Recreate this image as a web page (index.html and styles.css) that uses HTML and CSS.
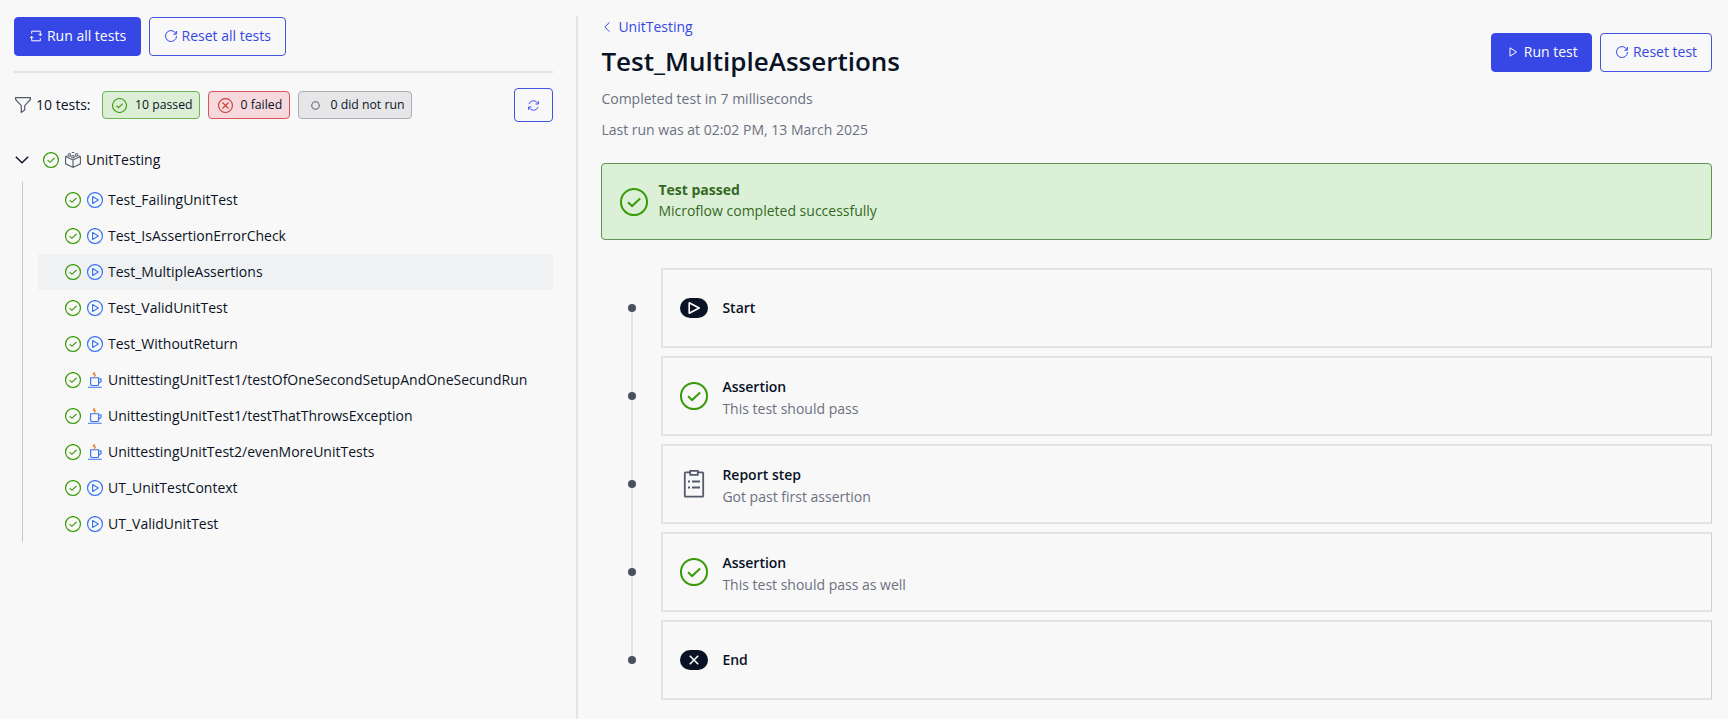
FILE: index.html
```
<!DOCTYPE html>
<html lang="en">
<head>
<meta charset="utf-8">
<title>Unit testing</title>
<link rel="stylesheet" href="styles.css">
</head>
<body>
<svg class="defs" aria-hidden="true">
  <symbol id="check" viewBox="0 0 16 16"><circle cx="8" cy="8" r="7.45"/><path d="M4.6 8.2 6.9 10.3 11.5 6"/></symbol>
  <symbol id="flow" viewBox="0 0 16 16"><circle cx="8" cy="8" r="7.45"/><path d="M5.6 4.6v6.8L11.4 8z" stroke-linejoin="round"/></symbol>
  <symbol id="java" viewBox="0 0 16 16"><path d="M3.6 5.7h8v6.2q0 1.6-1.6 1.6H5.2q-1.6 0-1.6-1.6zM11.6 7h2.5v2.2l-2.5 2M1 15.2h13.7"/><path class="steam" d="M7.8 0.2 6.3 1.8l2 1.2-1 1.7"/></symbol>
  <symbol id="reset" viewBox="0 0 12 12"><path d="M11.1 4A5.5 5.5 0 1 0 11.5 6M11.4 1v3.2H8.3"/></symbol>
</svg>
<div class="app">
  <aside class="side">
    <div class="actions">
      <button class="btn primary run-all"><svg class="i12" viewBox="0 0 12 12"><path d="M1.7 3.7V1.2h8.6v4.5M8.6 4l1.7 1.7L12 4M10.3 8.3v2.5H1.7V6.3M0 8l1.7-1.7L3.4 8"/></svg>Run all tests</button>
      <button class="btn reset-all"><svg class="i12"><use href="#reset"/></svg>Reset all tests</button>
    </div>
    <div class="filters">
      <svg class="funnel" viewBox="0 0 16 16"><path d="M.6.7h14.8v1.8L9.7 8.7v4.2l-3.4 2.4V8.7L.6 2.5z"/></svg>
      <span class="total">10 tests:</span>
      <span class="pill passed"><svg class="i14 ok"><use href="#check"/></svg>10 passed</span>
      <span class="pill failed"><svg class="i14 bad" viewBox="0 0 16 16"><circle cx="8" cy="8" r="7.4"/><path d="m4.8 4.8 6.4 6.4m0-6.4-6.4 6.4"/></svg>0 failed</span>
      <span class="pill idle"><svg class="i14" viewBox="0 0 14 14"><circle cx="7" cy="7" r="3.5"/></svg>0 did not run</span>
      <button class="btn refresh"><svg class="i11" viewBox="0 0 12 12"><path d="M1 4.5A5.2 5.2 0 0 1 10.8 4M11.4 1.2v3.2H8.2M11 7.5A5.2 5.2 0 0 1 1.2 8M.6 10.8V7.6h3.2"/></svg></button>
    </div>
    <div class="module">
      <svg class="chev" viewBox="0 0 14 8"><path d="m.8.8 6.2 6 6.2-6"/></svg>
      <svg class="i16 ok"><use href="#check"/></svg>
      <svg class="i16 box" viewBox="0 0 16 16"><path d="M.6 4.6 8 8l7.4-3.4M.6 4.6v7.2L8 15.4l7.4-3.6V4.6M8 8v7.4M.6 4.6l1.6-.7M15.4 4.6l-1.6-.7M3.2 2.2v1.6q1.2.7 2.4 0V2.2M10.4 2.2v1.6q1.2.7 2.4 0V2.2M6.8 4.2v1.4q1.2.7 2.4 0V4.2"/><path d="M3.2 1.7h2.4M10.4 1.7h2.4M6.8.5h2.4M6.8 3.7h2.4"/></svg>
      <span>UnitTesting</span>
    </div>
    <ul class="tree">
      <li><svg class="i16 ok"><use href="#check"/></svg><svg class="i16 mf"><use href="#flow"/></svg>Test_FailingUnitTest</li>
      <li><svg class="i16 ok"><use href="#check"/></svg><svg class="i16 mf"><use href="#flow"/></svg>Test_IsAssertionErrorCheck</li>
      <li class="selected"><svg class="i16 ok"><use href="#check"/></svg><svg class="i16 mf"><use href="#flow"/></svg>Test_MultipleAssertions</li>
      <li><svg class="i16 ok"><use href="#check"/></svg><svg class="i16 mf"><use href="#flow"/></svg>Test_ValidUnitTest</li>
      <li><svg class="i16 ok"><use href="#check"/></svg><svg class="i16 mf"><use href="#flow"/></svg>Test_WithoutReturn</li>
      <li><svg class="i16 ok"><use href="#check"/></svg><svg class="i16 mf"><use href="#java"/></svg>UnittestingUnitTest1/testOfOneSecondSetupAndOneSecundRun</li>
      <li><svg class="i16 ok"><use href="#check"/></svg><svg class="i16 mf"><use href="#java"/></svg>UnittestingUnitTest1/testThatThrowsException</li>
      <li><svg class="i16 ok"><use href="#check"/></svg><svg class="i16 mf"><use href="#java"/></svg>UnittestingUnitTest2/evenMoreUnitTests</li>
      <li><svg class="i16 ok"><use href="#check"/></svg><svg class="i16 mf"><use href="#flow"/></svg>UT_UnitTestContext</li>
      <li><svg class="i16 ok"><use href="#check"/></svg><svg class="i16 mf"><use href="#flow"/></svg>UT_ValidUnitTest</li>
    </ul>
  </aside>
  <main class="detail">
    <header class="head">
      <div>
        <a class="back"><svg class="back-i" viewBox="0 0 6 10"><path d="M5.4.4.8 5l4.6 4.6"/></svg>UnitTesting</a>
        <h1>Test_MultipleAssertions</h1>
        <p class="meta">Completed test in 7 milliseconds</p>
        <p class="meta">Last run was at 02:02 PM, 13 March 2025</p>
      </div>
      <div class="head-actions">
        <button class="btn primary run-one"><svg class="i12" viewBox="0 0 12 12"><path d="M3 1.8v8.4L9.5 6z" stroke-linejoin="round"/></svg>Run test</button>
        <button class="btn reset-one"><svg class="i12"><use href="#reset"/></svg>Reset test</button>
      </div>
    </header>
    <section class="alert">
      <svg class="i28 ok"><use href="#check"/></svg>
      <div><strong>Test passed</strong><p>Microflow completed successfully</p></div>
    </section>
    <ol class="steps">
      <li><span class="rail"></span><div class="card"><svg class="i28" viewBox="0 0 28 28"><rect class="dark" y="4" width="28" height="20" rx="10"/><path class="white" d="M9.2 8.8v10.4L19.2 14z" stroke-linejoin="round"/></svg><div><b>Start</b></div></div></li>
      <li><span class="rail"></span><div class="card"><svg class="i28 ok"><use href="#check"/></svg><div class="two"><b>Assertion</b><p>This test should pass</p></div></div></li>
      <li><span class="rail"></span><div class="card"><svg class="i28 clip" viewBox="0 0 28 28"><path d="M10 2.3H5.6q-.8 0-.8.8v22.8q0 .8.8.8h16.8q.8 0 .8-.8V3.1q0-.8-.8-.8H18M10.2.8h7.6v4h-7.6zM12 11.5h8M12 17.5h8M8 11.5h2M8 17.5h2"/></svg><div class="two"><b>Report step</b><p>Got past first assertion</p></div></div></li>
      <li><span class="rail"></span><div class="card"><svg class="i28 ok"><use href="#check"/></svg><div class="two"><b>Assertion</b><p>This test should pass as well</p></div></div></li>
      <li><span class="rail"></span><div class="card"><svg class="i28" viewBox="0 0 28 28"><rect class="dark" y="4" width="28" height="20" rx="10"/><path class="white" d="m9.8 9.8 8.4 8.4m0-8.4-8.4 8.4"/></svg><div><b>End</b></div></div></li>
    </ol>
  </main>
</div>
</body>
</html>
```
FILE: styles.css
```
* { box-sizing: border-box; }
body { margin: 0; background: #f8f8f8; color: #0a1325; font: 14px/20px "Open Sans", sans-serif; }
p, h1, ul, ol { margin: 0; padding: 0; }
ul, ol { list-style: none; }
svg { fill: none; stroke: currentColor; flex: none; overflow: visible; }
.defs { position: absolute; width: 0; height: 0; }
.app { display: flex; height: 719px; padding: 16px 16px 0 14px; overflow: hidden; }
.side { width: 538.5px; }
.i11 { width: 11px; height: 11px; }
.i12 { width: 12px; height: 12px; }
.i14 { width: 15px; height: 15px; }
.i16 { width: 16px; height: 16px; stroke-width: 1.15; }
.i28 { width: 28px; height: 28px; }
.ok { color: #3a9b0b; stroke-width: 1.15; }
.bad { color: #d43b3b; stroke-width: 1.2; }
.mf { color: #3b74f0; }
.steam { stroke: #e07316; }

.btn { display: flex; align-items: center; justify-content: center; gap: 5px; height: 39px; padding: 0; border: 1px solid #4353e2; border-radius: 4px; background: transparent; color: #3647e5; font: inherit; white-space: nowrap; }
.primary { background: #3647e5; border-color: #3647e5; color: #fff; }
.run-all { width: 127px; padding-left: 1px; }
.reset-all { width: 136.5px; padding-left: 1px; }
.actions { display: flex; gap: 8px; padding: .5px 0 15.5px; border-bottom: 2px solid #e3e3e3; }

.filters { display: flex; align-items: center; height: 34px; margin-top: 15px; }
.funnel { width: 16px; height: 16px; margin-left: 1px; color: #555b6a; stroke-width: 1.2; }
.total { width: 66px; margin-left: 5px; }
.pill { display: flex; align-items: center; gap: 8px; height: 28px; margin-right: 8px; padding-left: 9px; border: 1px solid; border-radius: 4px; font-size: 12.25px; white-space: nowrap; }
.passed { width: 98px; background: #dcefd6; border-color: #6cb550; }
.failed { width: 82px; padding-left: 8.5px; background: #f6d9dc; border-color: #d6565a; }
.idle { width: 113.5px; padding-left: 8.5px; background: #e6e6e8; border-color: #adadb0; }
.idle svg { color: #5f6472; }
.refresh { width: 38.5px; height: 34px; margin-left: auto; }

.module { display: flex; align-items: center; height: 24px; margin-top: 26px; padding-left: 1px; }
.chev { width: 14px; height: 8px; margin-right: 14px; stroke-width: 1.4; }
.box { margin: 0 5px 0 6px; color: #555b6a; stroke-width: 1.1; }
.tree { margin: 10px 0 0 8px; border-left: 1px solid #c8c8ca; padding-left: 15px; }
.tree li { display: flex; align-items: center; height: 36px; padding-left: 27px; white-space: nowrap; }
.tree .mf { margin: 0 5px 0 6px; }
.selected { background: #eff1f3; }

.detail { flex: 1; margin-left: 23.5px; padding-left: 23.4px; border-left: 2px solid #e3e3e3; }
.head { display: flex; justify-content: space-between; height: 147px; }
.back { display: flex; align-items: center; gap: 8px; height: 22px; padding-left: 3px; color: #3647e5; }
.back-i { width: 6px; height: 10px; }
h1 { margin-top: 5px; font-size: 26px; line-height: 36px; font-weight: 600; }
.meta { color: #6c7180; line-height: 20px; margin-top: 10px; }
.meta + .meta { margin-top: 11px; }
.head-actions { display: flex; gap: 8px; margin-top: 16.5px; }
.run-one { width: 101.5px; padding-left: 2px; }
.reset-one { width: 112px; padding-left: 1px; }
.alert { display: flex; align-items: center; gap: 10px; height: 77px; padding: 0 18px; border: 1px solid #5f9450; border-radius: 4px; background: #dcf0d7; color: #33691f; line-height: 21px; }
.alert div { margin-top: -4px; }
.steps { margin-top: 28px; }
.steps li { display: flex; height: 80px; margin-bottom: 8px; }
.rail { position: relative; width: 60px; }
.rail::before { content: ""; position: absolute; z-index: 1; left: 26.5px; top: 36px; width: 8px; height: 8px; border-radius: 50%; background: #4b5160; }
.rail::after { content: ""; position: absolute; left: 29.5px; top: 40px; width: 2px; height: 88px; background: #e3e3e3; }
.steps li:last-child .rail::after { display: none; }
.card { flex: 1; display: flex; align-items: center; gap: 14px; padding-left: 17px; border: 2px solid #e3e3e3; border-right: 1px solid #cfd0d2; }
.card b { display: block; font-weight: 600; }
.card p { margin-top: 2px; color: #6c7180; }
.two { padding-top: 3px; }
.clip { color: #555b6a; stroke-width: 1.8; }
.dark { fill: #0a1325; stroke: none; }
.white { stroke: #fff; stroke-width: 1.6; }
```
